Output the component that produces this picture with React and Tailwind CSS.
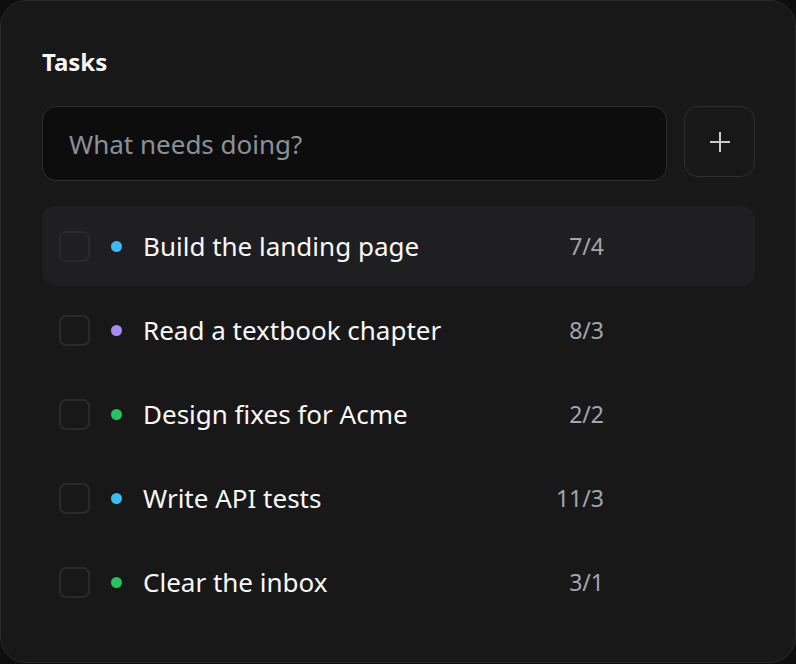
import React, { useState } from "react";

const tasks = [
  { title: "Build the landing page", dot: "bg-[#38bdf8]", count: "7/4" },
  { title: "Read a textbook chapter", dot: "bg-[#a78bfa]", count: "8/3" },
  { title: "Design fixes for Acme", dot: "bg-[#22c55e]", count: "2/2" },
  { title: "Write API tests", dot: "bg-[#38bdf8]", count: "11/3" },
  { title: "Clear the inbox", dot: "bg-[#22c55e]", count: "3/1" },
];

export default function App() {
  const [text, setText] = useState("");
  return (
    <div className="w-[796px] h-[664px] bg-[#0e0e0e] font-['Noto_Sans',sans-serif]">
      <div className="h-[663px] rounded-[26px] border border-[#2a2a2a] bg-[#181818] pl-[41px] pr-[40px] pt-[43px]">
        <h1 className="text-[24px] font-bold leading-[36px] text-[#f8f8f8]">Tasks</h1>

        <div className="mt-[26px] flex gap-[17px]">
          <input
            value={text}
            onChange={(e) => setText(e.target.value)}
            placeholder="What needs doing?"
            className="h-[75px] flex-1 rounded-[14px] border border-[#2e2e2e] bg-[#0d0d0d] px-[26px] text-[26px] text-white placeholder:text-[#8b9099] outline-none"
          />
          <button className="flex h-[71px] w-[71px] items-center justify-center rounded-[14px] border border-[#2e2e2e] bg-[#181818] text-[#c8ccd2]">
            <svg width="22" height="22" viewBox="0 0 22 22" fill="none" stroke="currentColor" strokeWidth="2">
              <path d="M11 1v20M1 11h20" />
            </svg>
          </button>
        </div>

        <ul className="mt-[25px] flex flex-col gap-[4px]">
          {tasks.map((t, i) => (
            <li
              key={i}
              className={`flex h-[80px] items-center rounded-[14px] pl-[17px] ${i === 0 ? "bg-[#1f1f21]" : ""}`}
            >
              <span className="h-[31px] w-[31px] rounded-[7px] border-2 border-[#2a2a2a]" />
              <span className={`ml-[21px] h-[11px] w-[11px] rounded-full ${t.dot}`} />
              <span className="ml-[21px] flex-1 text-[26px] text-[#f8f8f8]">{t.title}</span>
              <span className="mr-[151px] text-[23px] text-[#a3a6ad]">{t.count}</span>
            </li>
          ))}
        </ul>
      </div>
    </div>
  );
}
